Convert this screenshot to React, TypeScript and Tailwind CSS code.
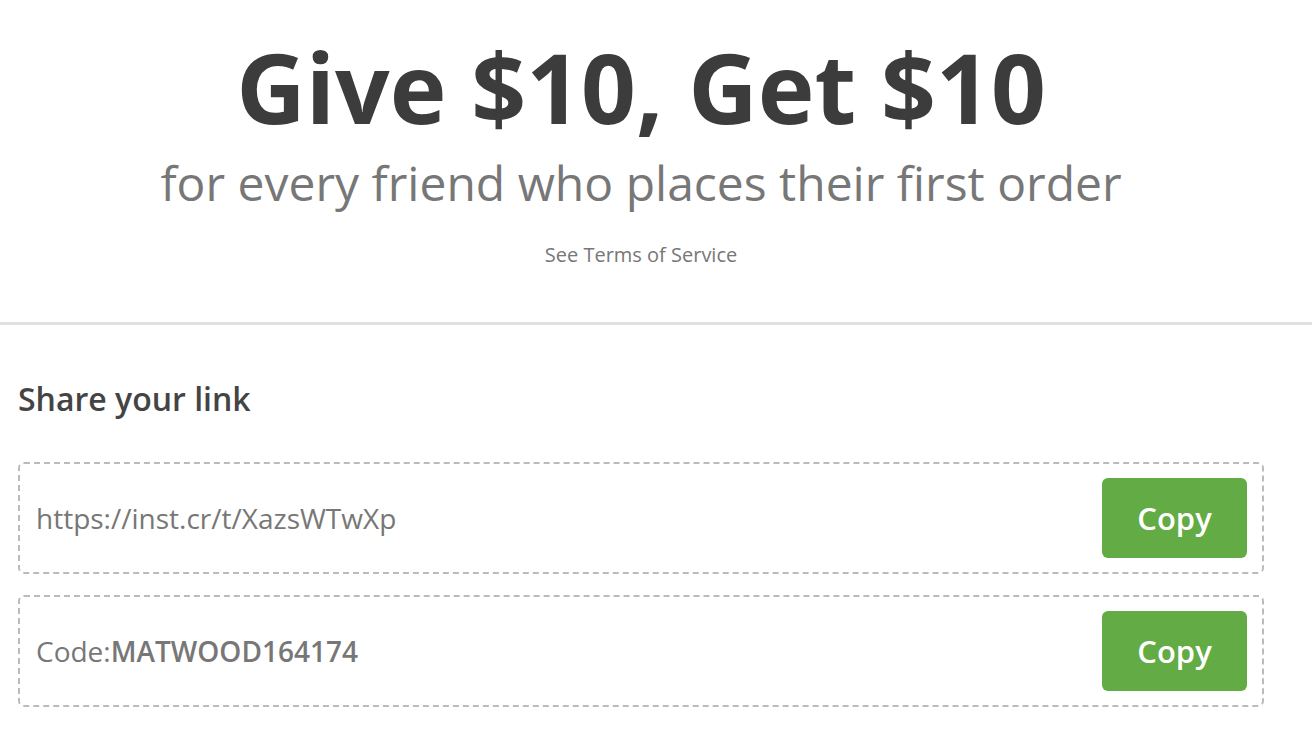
export default function App() {
  return (
    <div className="min-h-screen bg-white font-['Open_Sans',sans-serif] overflow-hidden">
      <div className="flex flex-col items-center pt-[32px] pb-[53px] pr-[30px]">
        <h1 className="text-[96px] font-bold leading-[110px] text-[#3c3c3c]">Give $10, Get $10</h1>
        <p className="text-[48px] leading-[60px] text-[#777] mt-[11px]">for every friend who places their first order</p>
        <a className="mt-[28px] text-[20px] leading-[28px] text-[#777]">See Terms of Service</a>
      </div>
      <div className="border-t-[3px] border-[#e0e0e0] rounded-tr-[6px] -mr-[2px]" />
      <div className="pl-[18px] pr-[48px] pt-[54px]">
        <h2 className="text-[32px] font-semibold leading-[40px] text-[#444]">Share your link</h2>
        <div className="mt-[43px] flex flex-col gap-[21px]">
          <div className="flex items-center justify-between border-2 border-dashed border-[#bbb] rounded-[6px] pl-[16px] pr-[15px] py-[14px]">
            <span className="text-[28px] text-[#777]">https://inst.cr/t/XazsWTwXp</span>
            <button className="w-[145px] h-[80px] rounded-[6px] bg-[#63ab44] text-white text-[31px] font-semibold">Copy</button>
          </div>
          <div className="flex items-center justify-between border-2 border-dashed border-[#bbb] rounded-[6px] pl-[16px] pr-[15px] py-[14px]">
            <span className="text-[28px] text-[#777]">
              Code:<span className="font-semibold">MATWOOD164174</span>
            </span>
            <button className="w-[145px] h-[80px] rounded-[6px] bg-[#63ab44] text-white text-[31px] font-semibold">Copy</button>
          </div>
        </div>
      </div>
    </div>
  );
}
